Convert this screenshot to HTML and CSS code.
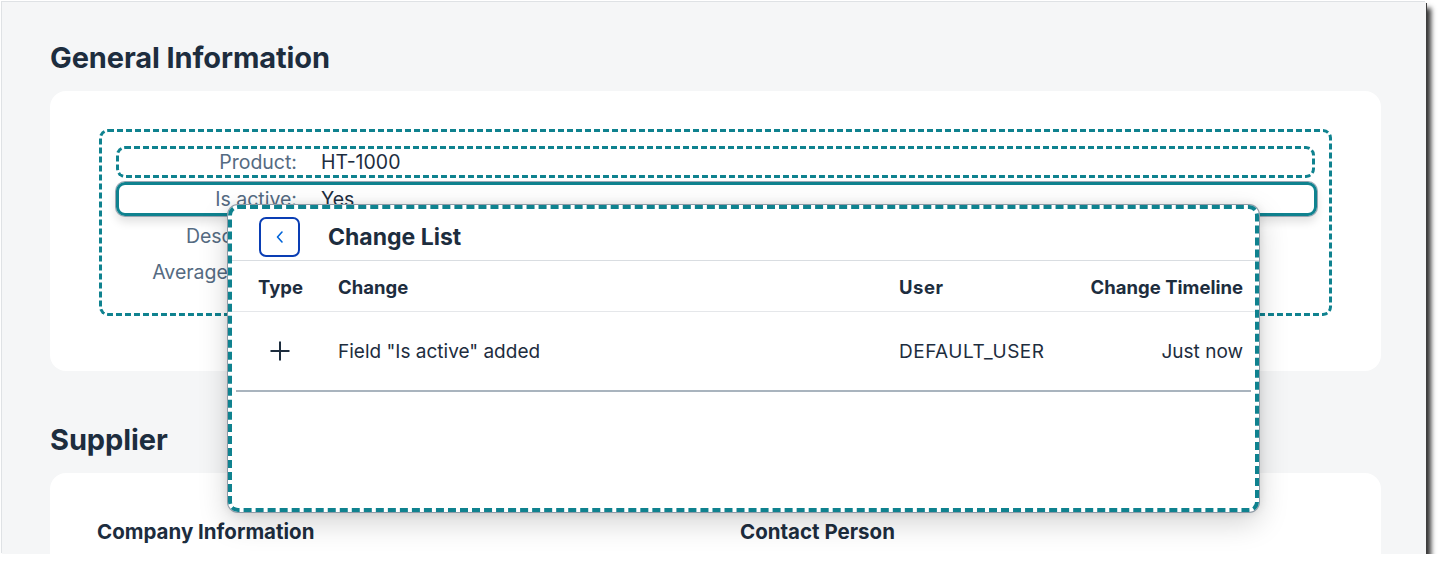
FILE: index.html
```html
<!DOCTYPE html>
<html lang="en">
<head>
<meta charset="utf-8">
<title>Object Page</title>
<link rel="stylesheet" href="styles.css">
</head>
<body>
<div class="frame">
  <h2 class="section-title first">General Information</h2>
  <div class="card card-general">
    <div class="form-outline">
      <div class="form-row row-dashed">
        <span class="label">Product:</span><span class="value">HT-1000</span>
      </div>
      <div class="form-row row-selected">
        <span class="label">Is active:</span><span class="value">Yes</span>
      </div>
      <div class="form-row">
        <span class="label">Description:</span><span class="value">Notebook Basic 15</span>
      </div>
      <div class="form-row">
        <span class="label">Average Rating:</span><span class="value">4.5</span>
      </div>
    </div>
  </div>

  <h2 class="section-title second">Supplier</h2>
  <div class="card card-supplier">
    <div class="supplier-cols">
      <h3 class="group-title">Company Information</h3>
      <h3 class="group-title">Contact Person</h3>
    </div>
  </div>

  <div class="popover">
    <div class="popover-header">
      <button class="back-btn" aria-label="Back">
        <svg width="14" height="16" viewBox="0 0 14 16"><path d="M9 3 L4.5 8 L9 13" fill="none" stroke="#0064d9" stroke-width="1.6" stroke-linecap="round" stroke-linejoin="round"/></svg>
      </button>
      <span class="popover-title">Change List</span>
    </div>
    <div class="table">
      <div class="tr th">
        <span class="c-type">Type</span>
        <span class="c-change">Change</span>
        <span class="c-user">User</span>
        <span class="c-time">Change Timeline</span>
      </div>
      <div class="tr td">
        <span class="c-type"><svg width="22" height="22" viewBox="0 0 22 22"><path d="M11 1.5 V20.5 M1.5 11 H20.5" stroke="#1d2d3e" stroke-width="2" fill="none"/></svg></span>
        <span class="c-change">Field "Is active" added</span>
        <span class="c-user">DEFAULT_USER</span>
        <span class="c-time">Just now</span>
      </div>
    </div>
  </div>
</div>
</body>
</html>
```

FILE: styles.css
```css
* { box-sizing: border-box; }
html, body { margin: 0; padding: 0; background: #ffffff; }
body { font-family: Inter, "Noto Sans", sans-serif; color: #1d2d3e; }

.frame {
  position: relative;
  margin: 2px 0 0 2px;
  width: 1424px;
  height: 552px;
  background: #f5f6f7;
  overflow: hidden;
  padding: 0 45px 0 48px;
  box-shadow: -1px -1px 0 #dfe2e5, 1px 1px 0 #3d3d3d, 5px 6px 5px rgba(0,0,0,0.8);
}

.section-title {
  margin: 0;
  font-size: 29px;
  line-height: 32px;
  font-weight: 700;
  color: #1d2d3e;
  letter-spacing: -0.1px;
}
.section-title.first { margin-top: 40px; }
.section-title.second { margin-top: 53px; }

.card {
  background: #fff;
  border-radius: 16px;
  margin-top: 17px;
}
.card-general {
  height: 280px;
  padding: 38px 49px 0 49px;
}

.form-outline {
  height: 187px;
  border: 3px dashed #0f828f;
  border-radius: 9px;
  padding: 14px 14px 0 14px;
  display: flex;
  flex-direction: column;
  gap: 4px;
}
.form-row {
  height: 32px;
  display: flex;
  align-items: center;
  gap: 24px;
  border: 3px solid transparent;
  border-radius: 9px;
  font-size: 19.5px;
}
.form-row.row-dashed { border: 3px dashed #0f828f; }
.form-row.row-selected {
  height: 34px;
  border: 3px solid #0f828f;
  box-shadow: 0 0 0 1px #9aa6b2, 0 6px 10px rgba(0,0,0,0.12);
  margin-right: -2px;
}
.label {
  width: 178px;
  text-align: right;
  color: #556b82;
}
.value { color: #1d2d3e; }

.card-supplier {
  height: 120px;
  padding: 46px 47px 0 47px;
}
.supplier-cols {
  display: grid;
  grid-template-columns: 643px 1fr;
}
.group-title {
  margin: 0;
  font-size: 20.5px;
  font-weight: 700;
  line-height: 26px;
}

/* popover overlay */
.popover {
  position: absolute;
  left: 226px;
  top: 203px;
  width: 1031px;
  height: 307px;
  background: #fff;
  border-radius: 10px;
  box-shadow: 0 0 0 1px #8e9aa6, 0 10px 30px rgba(0,0,0,0.18), 0 0 10px rgba(0,0,0,0.12);
  outline: 4px dashed #0f828f;
  outline-offset: -4px;
  overflow: hidden;
}
.popover-header {
  height: 56px;
  display: flex;
  align-items: center;
  padding: 8px 0 0 31px;
  gap: 28px;
  border-bottom: 1px solid #d9dde1;
}
.back-btn {
  width: 41px;
  height: 40px;
  border: 2px solid #0a3eb4;
  border-radius: 7px;
  background: #fff;
  display: flex;
  align-items: center;
  justify-content: center;
  padding: 0;
}
.back-btn svg { display: block; }
.popover-title {
  font-size: 23px;
  font-weight: 700;
}

.table { padding: 0 8px 0 8px; }
.tr {
  display: flex;
  align-items: center;
}
.th {
  height: 51px;
  padding-top: 2px;
  font-weight: 700;
  font-size: 18.5px;
  border-bottom: 1px solid #e5e7ea;
  margin: 0 -8px;
  padding-left: 8px;
  padding-right: 8px;
}
.td {
  height: 80px;
  font-size: 19px;
  border-bottom: 2px solid #a9b4be;
}
.c-type { width: 102px; display: flex; align-items: center; }
.th .c-type { padding-left: 22px; }
.td .c-type { padding-left: 33px; }
.c-change { width: 561px; }
.c-user { width: 160px; letter-spacing: 0.5px; }
.c-time { flex: 1; text-align: right; padding-right: 8px; }
```
